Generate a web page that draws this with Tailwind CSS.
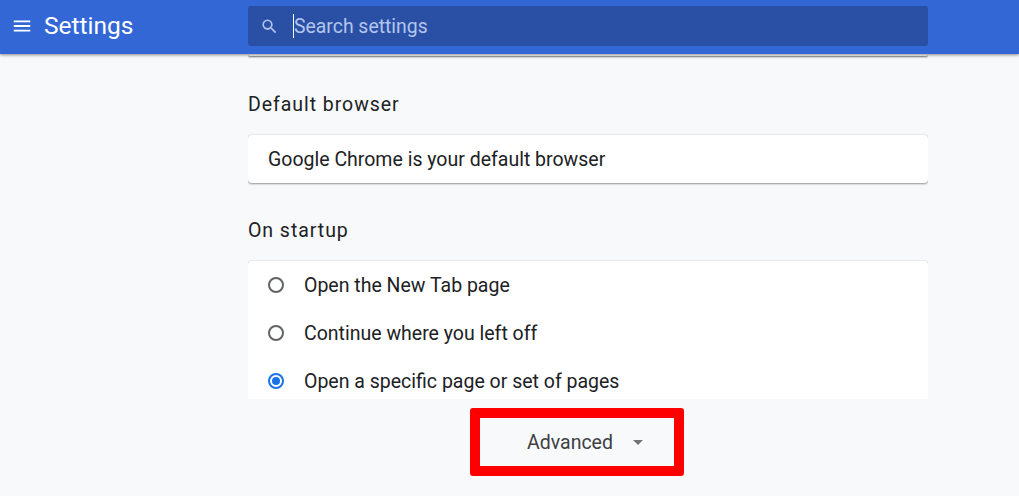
<!DOCTYPE html>
<html>
<head>
<meta charset="utf-8">
<script src="https://cdn.jsdelivr.net/npm/@tailwindcss/browser@4"></script>
</head>
<body class="m-0 bg-[#f8f9fa]">
<div class="relative w-[1019px] h-[496px] overflow-hidden bg-[#f8f9fa] font-['Roboto',sans-serif] text-[#202124]">
  <header class="relative z-20 h-[54px] bg-[#3367d6] flex items-start shadow-[0_1px_3px_rgba(0,0,0,0.45)]">
    <div class="w-[248px] h-[54px] flex items-center shrink-0 pb-[2px]">
      <svg class="ml-[11px] w-[22px] h-[22px]" viewBox="0 0 24 24" fill="#fff"><path d="M3 18h18v-2H3v2zm0-5h18v-2H3v2zm0-7v2h18V6H3z"/></svg>
      <span class="ml-[11px] text-[24.5px] leading-none text-white">Settings</span>
    </div>
    <div class="mt-[6px] w-[680px] h-[40px] rounded-[3px] bg-[#2a50a6] flex items-center">
      <svg class="ml-[12px] w-[19px] h-[19px]" viewBox="0 0 24 24" fill="#b3c5ec"><path d="M15.5 14h-.79l-.28-.27A6.47 6.47 0 0 0 16 9.5 6.5 6.5 0 1 0 9.5 16c1.61 0 3.09-.59 4.23-1.57l.27.28v.79l5 4.99L20.49 19l-4.99-5zm-6 0C7.01 14 5 11.99 5 9.5S7.01 5 9.5 5 14 7.01 14 9.5 11.99 14 9.5 14z"/></svg>
      <span class="ml-[14px] w-px h-[24px] bg-white"></span>
      <span class="text-[19.4px] leading-none pt-[1px] text-[#b3c5ec]">Search settings</span>
    </div>
  </header>

  <main class="absolute left-[248px] top-[54px] w-[680px] h-[345px] overflow-hidden">
    <div class="h-[2px] bg-white rounded-b-[4px] shadow-[0_1px_2px_rgba(0,0,0,0.55)]"></div>
    <h2 class="mt-[37px] h-[24px] text-[19.5px] leading-[24px] tracking-[0.95px] font-normal">Default browser</h2>
    <div class="mt-[18px] h-[48px] bg-white rounded-[4px] shadow-[0_1px_2px_rgba(60,64,67,0.5),0_0_2px_rgba(60,64,67,0.2)] flex items-center px-5 pt-[1px] text-[19.5px]">Google Chrome is your default browser</div>
    <h2 class="mt-[36px] h-[24px] text-[19.5px] leading-[24px] tracking-[0.95px] font-normal">On startup</h2>
    <div class="mt-[18px] bg-white rounded-t-[4px] shadow-[0_1px_2px_rgba(60,64,67,0.5),0_0_2px_rgba(60,64,67,0.2)] pb-4">
      <div class="h-[48px] flex items-center pl-5 text-[19.5px]">
        <span class="w-4 h-4 rounded-full border-2 border-[#5f6368] shrink-0"></span>
        <span class="ml-5 pt-[2px]">Open the New Tab page</span>
      </div>
      <div class="h-[48px] flex items-center pl-5 text-[19.5px]">
        <span class="w-4 h-4 rounded-full border-2 border-[#5f6368] shrink-0"></span>
        <span class="ml-5 pt-[2px]">Continue where you left off</span>
      </div>
      <div class="h-[48px] flex items-center pl-5 text-[19.5px]">
        <span class="w-4 h-4 rounded-full border-2 border-[#1a73e8] shrink-0 flex items-center justify-center"><span class="w-2 h-2 rounded-full bg-[#1a73e8]"></span></span>
        <span class="ml-5 pt-[2px]">Open a specific page or set of pages</span>
      </div>
    </div>
  </main>

  <div class="absolute left-[470px] top-[408px] w-[214px] h-[68px] border-[10px] border-[#ff0000] rounded-[3px] flex items-center text-[#3c4043]">
    <span class="ml-[47px] text-[19.5px] leading-none pt-[2px]">Advanced</span>
    <svg class="ml-[20px] w-[10px] h-[5px]" viewBox="0 0 10 5" fill="#70757a"><path d="M0 0h10L5 5z"/></svg>
  </div>
</div>
</body>
</html>
